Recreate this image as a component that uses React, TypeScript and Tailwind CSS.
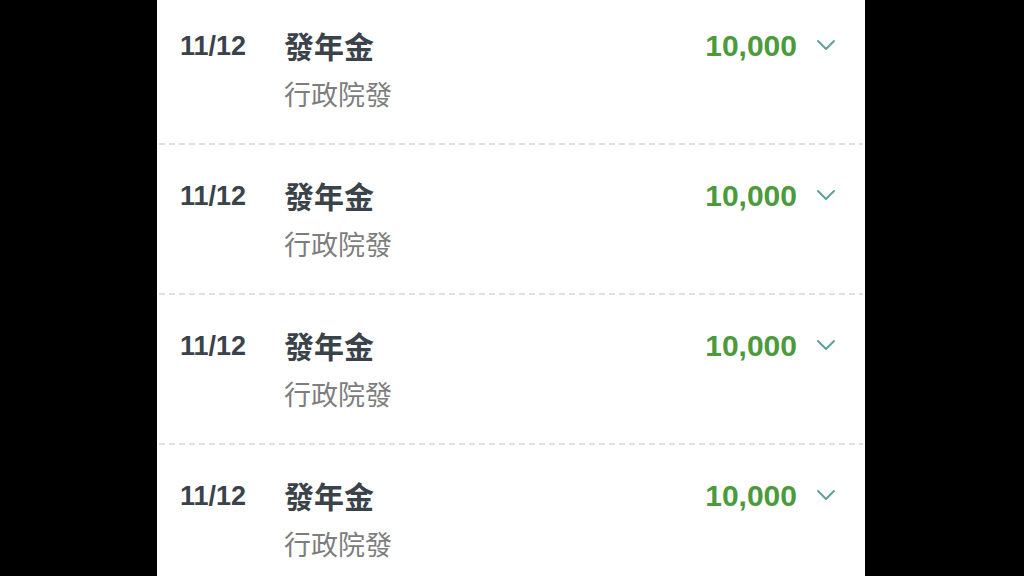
import React from 'react';

interface Entry {
  date: string;
  title: string;
  source: string;
  amount: string;
}

const entries: Entry[] = [
  { date: '11/12', title: '發年金', source: '行政院發', amount: '10,000' },
  { date: '11/12', title: '發年金', source: '行政院發', amount: '10,000' },
  { date: '11/12', title: '發年金', source: '行政院發', amount: '10,000' },
  { date: '11/12', title: '發年金', source: '行政院發', amount: '10,000' },
];

const Chevron = () => (
  <svg width="20" height="12" viewBox="0 0 20 12" fill="none" className="shrink-0">
    <path d="M2 2 L10 10 L18 2" stroke="#5f9f9c" strokeWidth="2" strokeLinecap="round" strokeLinejoin="round" />
  </svg>
);

const Row: React.FC<{ entry: Entry; first: boolean }> = ({ entry, first }) => (
  <div>
    {!first && (
      <div className="h-[2px] mx-[2px] bg-[repeating-linear-gradient(to_right,#e0e0e0_0_6px,transparent_6px_10px)]" />
    )}
    <div className={`flex pl-[23px] pr-[29px] ${first ? 'pt-[25px]' : 'pt-[30px]'} pb-[31px]`}>
      <div className="w-[104px] h-[42px] flex items-center text-[27px] font-bold text-[#3b434a] font-['Liberation_Sans',Arial,sans-serif]">
        {entry.date}
      </div>
      <div className="flex-1 flex flex-col gap-[11px]">
        <div className="h-[40px] flex items-center text-[30px] font-bold text-[#3b434a] font-['Noto_Sans_CJK_TC',sans-serif]">
          {entry.title}
        </div>
        <div className="h-[36px] flex items-center text-[27px] text-[#7d7d7d] font-['Noto_Sans_CJK_TC',sans-serif]">
          {entry.source}
        </div>
      </div>
      <div className="h-[40px] flex items-center gap-[19px]">
        <span className="text-[30px] font-bold text-[#4b9a3b] font-['Liberation_Sans',Arial,sans-serif]">
          {entry.amount}
        </span>
        <Chevron />
      </div>
    </div>
  </div>
);

export default function App() {
  return (
    <div className="w-[1024px] h-[576px] bg-black flex overflow-hidden">
      <div className="ml-[157px] w-[708px] h-full bg-white">
        {entries.map((e, i) => (
          <Row key={i} entry={e} first={i === 0} />
        ))}
      </div>
    </div>
  );
}
